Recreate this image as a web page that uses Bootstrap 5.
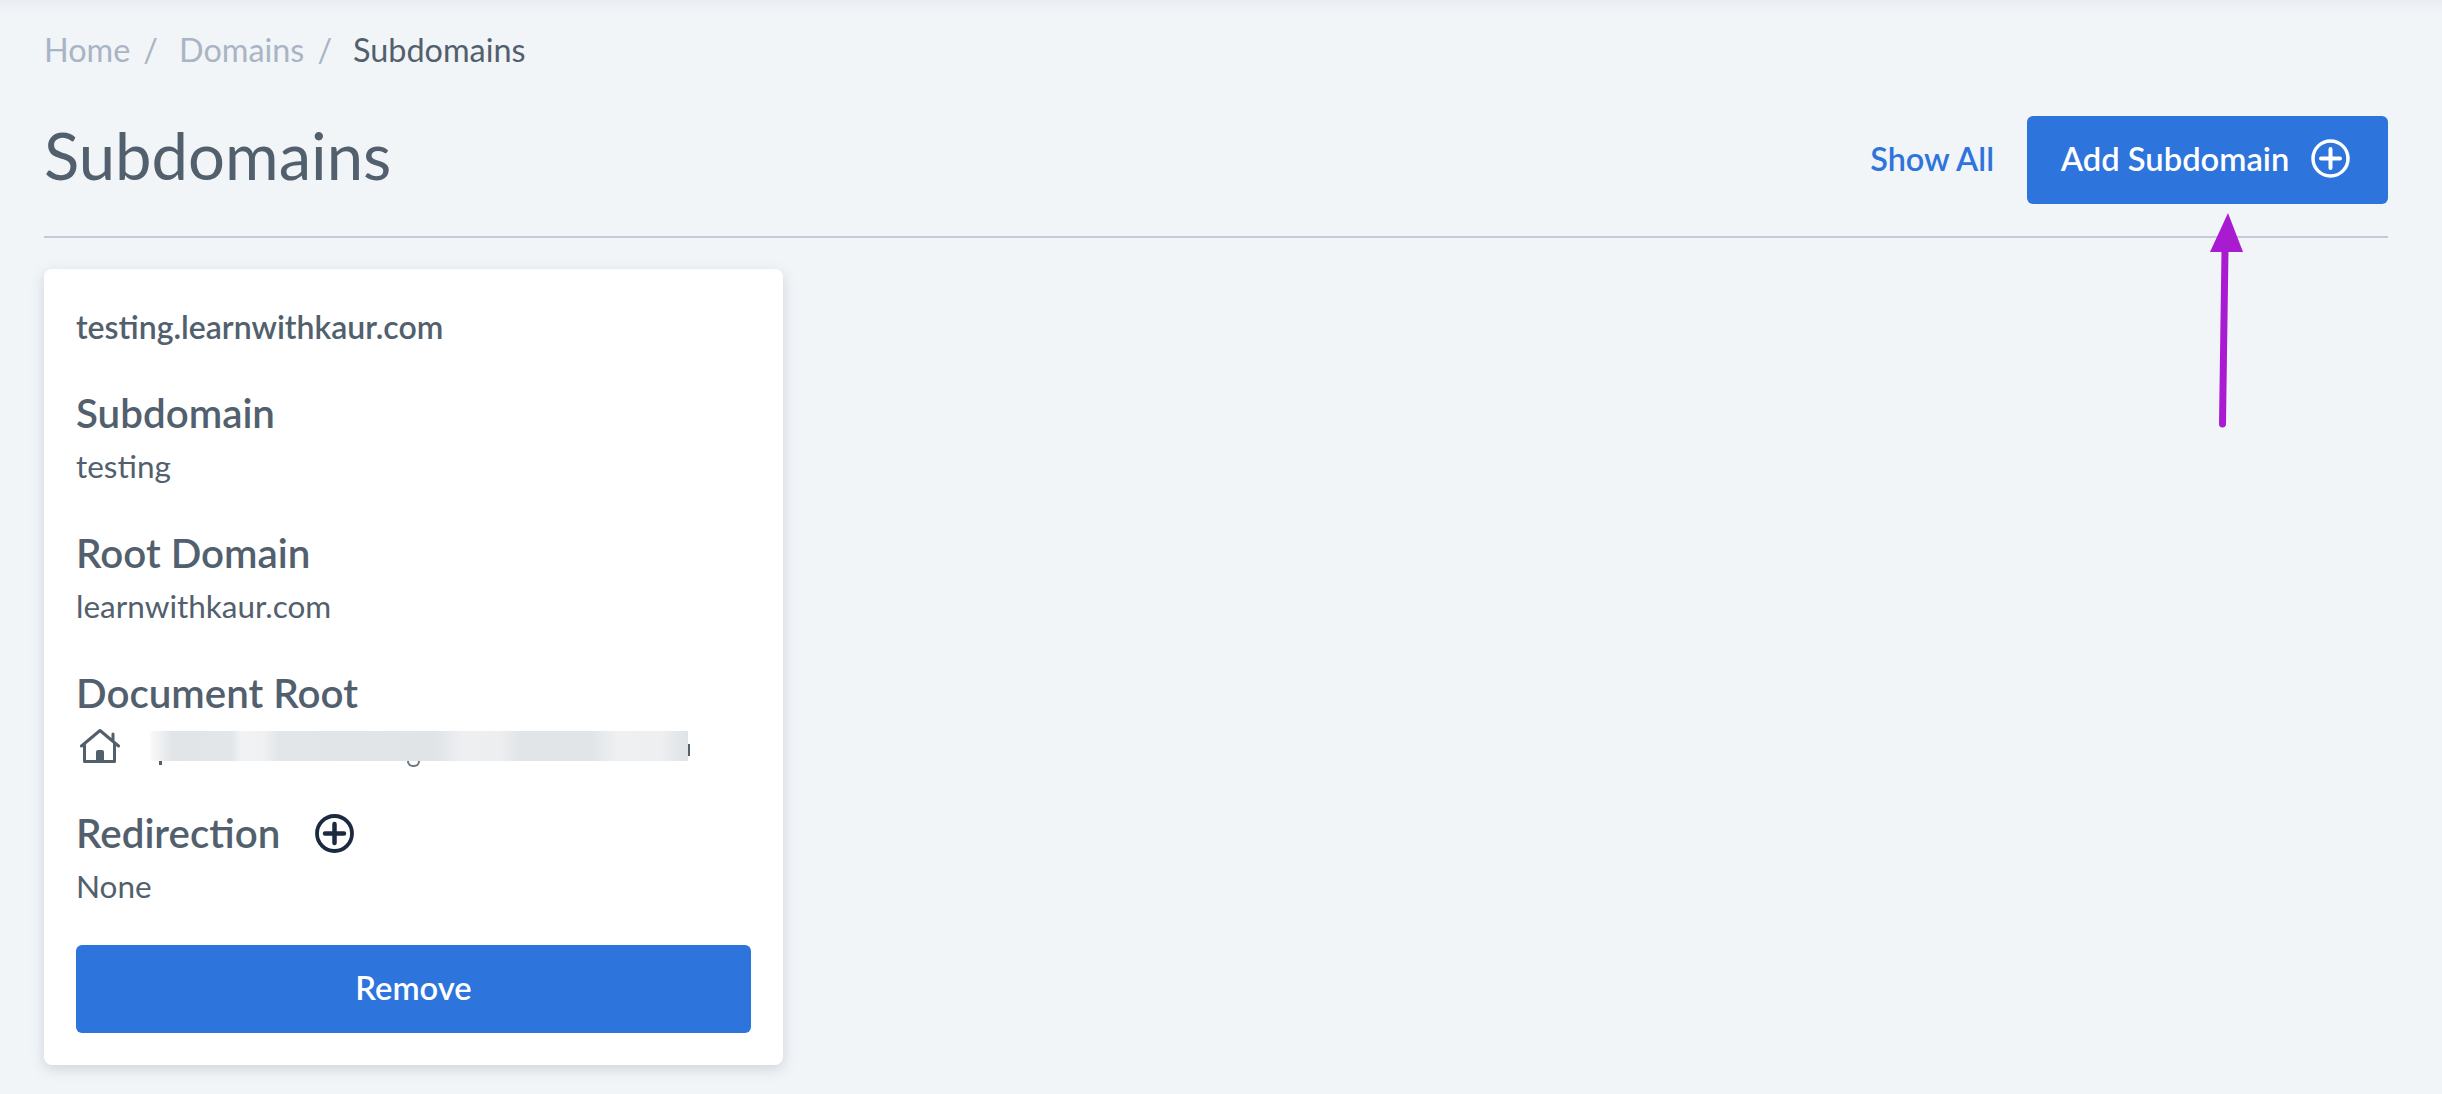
<!doctype html>
<html lang="en">
<head>
<meta charset="utf-8">
<title>Subdomains</title>
<link href="https://cdn.jsdelivr.net/npm/bootstrap@5.3.0/dist/css/bootstrap.min.css" rel="stylesheet">
<style>
html,body{height:100%}
body{background:#f2f5f8;font-family:"Lato","Liberation Sans",sans-serif;color:#52606d;overflow:hidden;position:relative}
.top-shade{height:14px;background:linear-gradient(#e9edf1,#f2f5f8)}
.page-wrap{padding:0 54px 0 44px}
.crumbs{margin:0;padding:17px 0 0;font-size:32.400px;line-height:38px;list-style:none;display:flex}
.crumbs li a{color:#a9b4c4;text-decoration:none}
.crumbs li.sep{color:#a9b4c4;padding:0 21px 0 13px}
.crumbs li.here{color:#52606d}
.head-row{height:169px;border-bottom:2px solid #c5cbd5;padding-bottom:32px}
.page-title{font-size:65.200px;font-weight:400;margin:0;line-height:1;color:#52606d}
.show-all{font-size:32.400px;font-weight:600;color:#2d74dc;text-decoration:none;margin:0 33px 1px 0}
.btn-blue{background:#2d74dc;border:0;border-radius:6px;color:#fff;font-size:32.700px;font-weight:600;height:88px;display:flex;align-items:center;justify-content:center;padding:0 0 2px}
.btn-blue:hover{background:#2d74dc;color:#fff}
.btn-add{width:361px;gap:22px;padding:0 4px 2px 0}
.btn-add svg{margin-top:-1px}
.sub-card{width:739px;margin-top:31px;background:#fff;border:0;border-radius:8px;box-shadow:0 4px 14px rgba(82,96,109,.22);padding:32px}
.card-host{font-size:32px;font-weight:600;line-height:50px;margin:1px 0 37px}
.field-label{font-size:40.300px;font-weight:600;line-height:48px;margin:0}
.field-val{font-size:31.500px;line-height:40px;margin:9px 0 43px}
.doc-row{height:40px;margin:9px 0 43px}
.home-icon{margin-left:4px;flex:none}
.redir-row{gap:35px}
.blur-box{width:538px;height:30px;margin-left:30px;position:relative;background:linear-gradient(#f1f3f4,#e6e9ec 35%,#e6e9ec 100%)}
.blur-fill{position:absolute;inset:0;background:linear-gradient(90deg,#fafafa,#e2e5e8 4%,#e3e6e9 15%,#f0f2f3 17%,#eff1f3 21%,#e3e6e9 24%,#e1e4e7 53%,#edeff1 58%,#eceef0 65%,#e2e5e8 69%,#e2e5e8 82%,#eef0f1 87%,#edeff1 95%,#dfe2e6 100%)}
.bit{position:absolute;background:#52606d}
.bit-p{left:9px;top:30px;width:3px;height:4px}
.bit-g{left:257px;top:30px;width:13px;height:6px;background:none;border:2px solid #6c7884;border-top:0;border-radius:0 0 7px 7px}
.bit-n{left:538px;top:13px;width:2px;height:12px}
.btn-remove{width:100%;margin-top:-4.500px}
.arrow-layer{position:absolute;left:0;top:0;pointer-events:none}
</style>
</head>
<body>
<div class="top-shade"></div>
<div class="page-wrap">
<ol class="crumbs">
<li><a href="#">Home</a></li><li class="sep">/</li>
<li><a href="#">Domains</a></li><li class="sep">/</li>
<li class="here">Subdomains</li>
</ol>
<div class="head-row d-flex justify-content-between align-items-end">
<h1 class="page-title mb-3">Subdomains</h1>
<div class="d-flex align-items-center">
<a class="show-all" href="#">Show All</a>
<button class="btn btn-blue btn-add" type="button">Add Subdomain
<svg width="39" height="39" viewBox="0 0 39 39" fill="none" stroke="#fff" stroke-width="3.5"><circle cx="19.500" cy="19.500" r="17.500"/><path d="M19.500 10v19M10 19.500h19" stroke-width="4" stroke-linecap="round"/></svg>
</button>
</div>
</div>
<div class="card sub-card">
<div class="card-host">testing.learnwithkaur.com</div>
<h2 class="field-label">Subdomain</h2>
<p class="field-val">testing</p>
<h2 class="field-label">Root Domain</h2>
<p class="field-val">learnwithkaur.com</p>
<h2 class="field-label">Document Root</h2>
<div class="doc-row d-flex align-items-center">
<svg class="home-icon" width="40" height="34" viewBox="0 0 40 34" fill="none" stroke="#52606d" stroke-width="3" stroke-linecap="round" stroke-linejoin="round"><path d="M1.500 17 20 1.500 38.500 17M4.500 14.500v18h30v-18M33 5v7"/><path d="M16 33V23a2 2 0 0 1 2-2h4a2 2 0 0 1 2 2v10z" fill="#52606d" stroke="none"/></svg>
<div class="blur-box"><div class="blur-fill"></div><span class="bit bit-p"></span><span class="bit bit-g"></span><span class="bit bit-n"></span></div>
</div>
<div class="d-flex align-items-center redir-row">
<h2 class="field-label">Redirection</h2>
<svg width="39" height="39" viewBox="0 0 39 39" fill="none" stroke="#1c2a3f" stroke-width="3.8"><circle cx="19.500" cy="19.500" r="17.500"/><path d="M19.500 10v19M10 19.500h19" stroke-width="4.500" stroke-linecap="round"/></svg>
</div>
<p class="field-val">None</p>
<button class="btn btn-blue btn-remove" type="button">Remove</button>
</div>
</div>
<svg class="arrow-layer" width="2442" height="1094" viewBox="0 0 2442 1094"><path d="M2222.500 424 2225 250" stroke="#a81bd1" stroke-width="7" stroke-linecap="round"/><path d="M2228 213 2243 252H2210z" fill="#a81bd1"/></svg>
<script src="https://cdn.jsdelivr.net/npm/bootstrap@5.3.0/dist/js/bootstrap.bundle.min.js"></script>
</body>
</html>
